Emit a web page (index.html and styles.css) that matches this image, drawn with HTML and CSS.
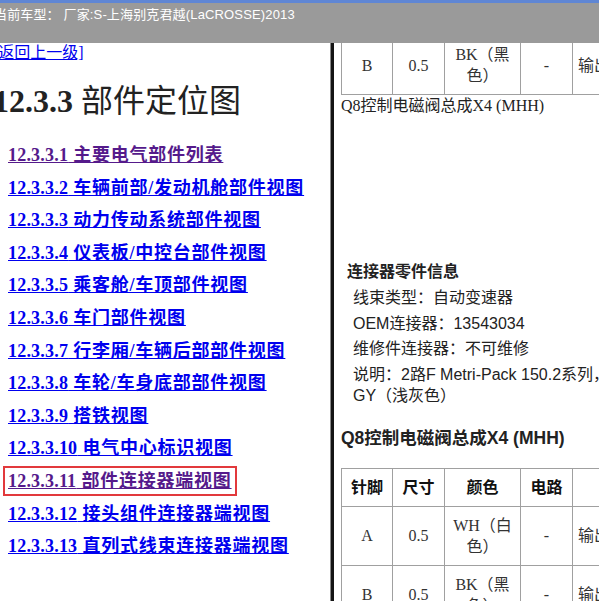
FILE: index.html
```html
<!DOCTYPE html>
<html lang="zh-CN">
<head>
  <meta charset="UTF-8" />
  <title>部件定位图</title>
  <link rel="stylesheet" href="styles.css">
</head>
<body>
  <div class="topbar">
    <span class="car">当前车型： 厂家:S-上海别克君越(LaCROSSE)2013</span>
  </div>

  <div class="frames">
    <div class="nav">
      <div class="nav-inner">
        <p class="back-row"><a href="#">[返回上一级]</a></p>
        <h1><b>12.3.3</b> 部件定位图</h1>
        <ul class="toc">
          <li><a class="visited" href="#"><span class="num">12.3.3.1</span> 主要电气部件列表</a></li>
          <li><a href="#"><span class="num">12.3.3.2</span> 车辆前部/发动机舱部件视图</a></li>
          <li><a href="#"><span class="num">12.3.3.3</span> 动力传动系统部件视图</a></li>
          <li><a href="#"><span class="num">12.3.3.4</span> 仪表板/中控台部件视图</a></li>
          <li><a href="#"><span class="num">12.3.3.5</span> 乘客舱/车顶部件视图</a></li>
          <li><a href="#"><span class="num">12.3.3.6</span> 车门部件视图</a></li>
          <li><a href="#"><span class="num">12.3.3.7</span> 行李厢/车辆后部部件视图</a></li>
          <li><a href="#"><span class="num">12.3.3.8</span> 车轮/车身底部部件视图</a></li>
          <li><a href="#"><span class="num">12.3.3.9</span> 搭铁视图</a></li>
          <li><a href="#"><span class="num">12.3.3.10</span> 电气中心标识视图</a></li>
          <li><a class="visited current" href="#"><span class="num">12.3.3.11</span> 部件连接器端视图</a></li>
          <li><a href="#"><span class="num">12.3.3.12</span> 接头组件连接器端视图</a></li>
          <li><a href="#"><span class="num">12.3.3.13</span> 直列式线束连接器端视图</a></li>
        </ul>
      </div>
    </div>

    <div class="divider"></div>

    <div class="doc">
      <div class="doc-inner">
        <table class="pins">
          <colgroup>
            <col class="c-pin"><col class="c-size"><col class="c-color"><col class="c-circuit"><col class="c-func">
          </colgroup>
          <tr>
            <td>B</td><td>0.5</td><td>BK（黑色）</td><td>-</td><td class="func">输出</td>
          </tr>
        </table>
        <p class="caption">Q8控制电磁阀总成X4 (MHH)</p>

        <div class="parts-info">
          <h3>连接器零件信息</h3>
          <p>线束类型：自动变速器</p>
          <p>OEM连接器：13543034</p>
          <p>维修件连接器：不可维修</p>
          <p>说明：2路F Metri-Pack 150.2系列，<br>GY（浅灰色）</p>
        </div>

        <h2 class="conn-title">Q8控制电磁阀总成X4 (MHH)</h2>
        <table class="pins">
          <colgroup>
            <col class="c-pin"><col class="c-size"><col class="c-color"><col class="c-circuit"><col class="c-func">
          </colgroup>
          <tr>
            <th>针脚</th><th>尺寸</th><th>颜色</th><th>电路</th><th>功能</th>
          </tr>
          <tr>
            <td>A</td><td>0.5</td><td>WH（白色）</td><td>-</td><td class="func">输出</td>
          </tr>
          <tr>
            <td>B</td><td>0.5</td><td>BK（黑色）</td><td>-</td><td class="func">输出</td>
          </tr>
        </table>
      </div>
    </div>
  </div>
</body>
</html>
```

FILE: styles.css
```css
* { box-sizing: border-box; }
html, body { height: 100%; }
body {
  margin: 0;
  overflow: hidden;
  background: #fff;
  color: #222;
  font-family: "Liberation Serif", "Noto Sans CJK SC", serif;
}

/* header strip */
.topbar {
  height: 43px;
  border-top: 3px solid #5f86d4;
  background: #9a9a9a;
  color: #fff;
  font-family: "Liberation Sans", "Noto Sans CJK SC", sans-serif;
  font-size: 13px;
  letter-spacing: 0.15px;
  line-height: 16px;
  padding-top: 4px;
  white-space: nowrap;
  overflow: hidden;
}
.car { margin-left: -6px; }

.frames {
  display: flex;
  height: 558px;
}

/* left frame: table of contents */
.nav {
  width: 330px;
  flex: none;
  overflow: hidden;
}
.nav-inner { margin-left: -7px; }
a { color: #0000ee; }
a.visited { color: #551a8b; }
.back-row {
  margin: 0;
  font-size: 16px;
  line-height: 20px;
}
h1 {
  margin: 18px 0 0;
  font-size: 32px;
  line-height: 40px;
  font-weight: normal;
  white-space: nowrap;
}
.toc {
  list-style: none;
  margin: 18px 0 0;
  padding-left: 15px;
}
.toc li {
  height: 32.6px;
  line-height: 32.6px;
  white-space: nowrap;
}
.toc a {
  font-size: 18px;
  font-weight: bold;
  letter-spacing: 0.75px;
}
.toc .num { letter-spacing: 0.2px; }
.toc a.current {
  outline: 2px solid #e2393c;
  outline-offset: 3px;
}

.divider {
  width: 4px;
  flex: none;
  border-left: 1px solid #8a8a8a;
  background: #141414;
}

/* right frame: connector document */
.doc {
  flex: 1;
  overflow: hidden;
  padding-left: 7px;
}
.doc-inner { margin-top: -8px; }

.pins {
  border-collapse: collapse;
  table-layout: fixed;
  width: 361px;
}
.c-pin { width: 51px; }
.c-size { width: 52px; }
.c-color { width: 76px; }
.c-circuit { width: 52px; }
.c-func { width: 130px; }
.pins th, .pins td {
  border: 1px solid #a0a0a0;
  padding: 8px 4px;
  font-size: 16px;
  line-height: 21px;
  text-align: center;
  color: #333;
}
.pins th { color: #111; font-weight: bold; }
.pins td.func { text-align: left; padding-left: 5px; white-space: nowrap; }

.caption {
  margin: 0;
  font-size: 16px;
  line-height: 21px;
}

.parts-info {
  margin-top: 145px;
  font-family: "Liberation Sans", "Noto Sans CJK SC", sans-serif;
  font-size: 16px;
  line-height: 21px;
  color: #222;
}
.parts-info h3 {
  margin: 0 0 5px 6px;
  font-size: 16px;
  line-height: 21px;
}
.parts-info p {
  margin: 0 0 4.5px 12px;
  white-space: nowrap;
}

.conn-title {
  margin: 20px 0 18px;
  font-family: "Liberation Sans", "Noto Sans CJK SC", sans-serif;
  font-size: 17.5px;
  line-height: 24px;
  white-space: nowrap;
}
```
